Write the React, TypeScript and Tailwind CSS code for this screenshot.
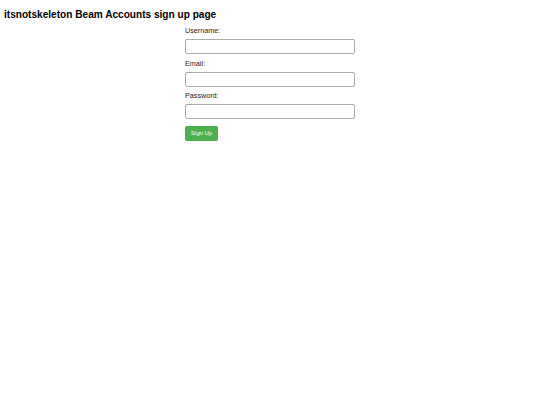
export default function App() {
  return (
    <div className="min-h-[405px] bg-white font-['Liberation_Sans',Arial,sans-serif] text-black">
      <h1 className="pl-[4px] pt-[9px] text-[10.1px] font-bold leading-[12px]">
        itsnotskeleton Beam Accounts sign up page
      </h1>
      <form className="mx-auto mt-[5px] flex w-[170px] flex-col">
        <label className="text-[7.2px] leading-[10px] text-[#222]">Username:</label>
        <input className="mt-[3px] h-[15px] w-full rounded-[2px] border border-[#ababab] bg-white" />
        <label className="mt-[5px] text-[7.2px] leading-[10px] text-[#222]">Email:</label>
        <input className="mt-[3px] h-[15px] w-full rounded-[2px] border border-[#ababab] bg-white" />
        <label className="mt-[4px] text-[7.2px] leading-[10px] text-[#222]">Password:</label>
        <input type="password" className="mt-[3px] h-[15px] w-full rounded-[2px] border border-[#ababab] bg-white" />
        <div className="mt-[7px] flex">
          <button type="button" className="h-[15px] w-[33px] rounded-[2px] bg-[#4caf50] text-[6px] leading-[15px] text-white">
            Sign Up
          </button>
        </div>
      </form>
    </div>
  );
}
